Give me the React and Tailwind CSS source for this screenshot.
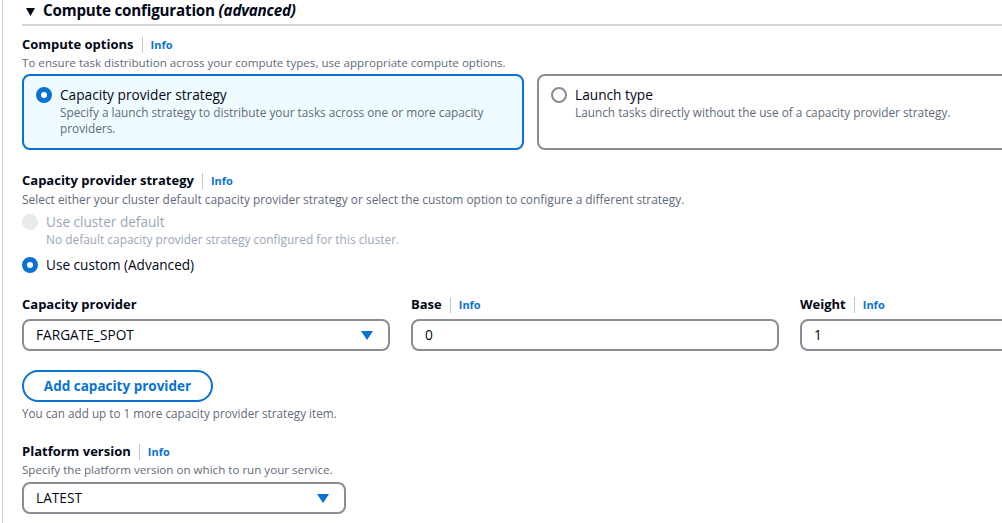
import React from "react";

function InfoLabel({ label, info = true }) {
  return (
    <div className="flex items-center h-[20px]">
      <span className="text-[13px] font-bold text-[#000716]">{label}</span>
      {info && <span className="mx-[8px] h-[16px] w-px bg-[#c6c6cd]"></span>}
      {info && <span className="text-[11px] font-bold text-[#0972d3]">Info</span>}
    </div>
  );
}

function Radio({ checked, disabled }) {
  if (disabled) {
    return <span className="block w-[16px] h-[16px] rounded-full bg-[#e9ebed] shrink-0"></span>;
  }
  if (checked) {
    return <span className="block w-[16px] h-[16px] rounded-full border-[5px] border-[#0972d3] bg-white shrink-0"></span>;
  }
  return <span className="block w-[16px] h-[16px] rounded-full border-2 border-[#8c8c94] bg-white shrink-0"></span>;
}

function Caret() {
  return (
    <svg width="12" height="9" viewBox="0 0 12 9">
      <path d="M0 0h12L6 9z" fill="#0972d3" />
    </svg>
  );
}

function Select({ value, width }) {
  return (
    <div className={`${width} h-[32px] rounded-[8px] border-2 border-[#8c8c94] bg-white flex items-center justify-between pl-[12px] pr-[15px]`}>
      <span className="text-[13.7px] text-[#000716]">{value}</span>
      <Caret />
    </div>
  );
}

function Input({ value }) {
  return (
    <div className="w-[368px] h-[32px] rounded-[8px] border-2 border-[#8c8c94] bg-white flex items-center pl-[12px]">
      <span className="text-[13.7px] text-[#000716]">{value}</span>
    </div>
  );
}

export default function App() {
  return (
    <div className="w-[1002px] h-[523px] overflow-hidden bg-white" style={{ fontFamily: '"Open Sans", "Noto Sans", sans-serif' }}>
      <div className="ml-[2px] border-l border-[#d1d5db] h-full pl-[19px]">
        <div className="w-[1200px]">
          <div className="flex items-center h-[26px] border-b-2 border-[#d5d5d9]">
            <svg width="9" height="8" viewBox="0 0 9 8" className="ml-[4px] mr-[8px]">
              <path d="M0 0h9L4.5 8z" fill="#000716" />
            </svg>
            <span className="text-[15.2px] tracking-[-0.2px] font-bold text-[#000716] leading-none pb-[2px]">
              Compute configuration <i className="font-bold">(advanced)</i>
            </span>
          </div>

          <div className="mt-[9px]">
            <InfoLabel label="Compute options" />
            <p className="text-[11.6px] text-[#5f6b7a] leading-[16px]">
              To ensure task distribution across your compute types, use appropriate compute options.
            </p>
          </div>

          <div className="flex gap-[13px] mt-[3px]">
            <div className="w-[502px] h-[76px] rounded-[8px] border-2 border-[#0972d3] bg-[#f0fbff] flex pt-[9px] pl-[12px] pr-[20px]">
              <div className="pt-[2px]"><Radio checked /></div>
              <div className="ml-[8px]">
                <div className="text-[13.7px] text-[#000716] leading-[19px]">Capacity provider strategy</div>
                <div className="text-[11.8px] text-[#5f6b7a] leading-[16px]">
                  Specify a launch strategy to distribute your tasks across one or more capacity providers.
                </div>
              </div>
            </div>
            <div className="w-[502px] h-[76px] rounded-[8px] border-2 border-[#8c8c94] bg-white flex pt-[9px] pl-[12px]">
              <div className="pt-[2px]"><Radio /></div>
              <div className="ml-[8px]">
                <div className="text-[13.7px] text-[#000716] leading-[19px]">Launch type</div>
                <div className="text-[11.8px] text-[#5f6b7a] leading-[16px]">
                  Launch tasks directly without the use of a capacity provider strategy.
                </div>
              </div>
            </div>
          </div>

          <div className="mt-[21px]">
            <InfoLabel label="Capacity provider strategy" />
            <p className="text-[11.9px] text-[#5f6b7a] leading-[16px]">
              Select either your cluster default capacity provider strategy or select the custom option to configure a different strategy.
            </p>
          </div>

          <div className="mt-[5px] flex">
            <div className="pt-[2px]"><Radio disabled /></div>
            <div className="ml-[8px]">
              <div className="text-[13.6px] text-[#9ba7b6] leading-[19px]">Use cluster default</div>
              <div className="text-[11.9px] text-[#9ba7b6] leading-[16px]">No default capacity provider strategy configured for this cluster.</div>
            </div>
          </div>
          <div className="mt-[8px] flex items-center">
            <Radio checked />
            <div className="ml-[8px] text-[13.6px] text-[#000716] leading-[19px]">Use custom (Advanced)</div>
          </div>

          <div className="mt-[21px] flex gap-[21px]">
            <div>
              <InfoLabel label="Capacity provider" info={false} />
              <div className="mt-[4px]"><Select value="FARGATE_SPOT" width="w-[368px]" /></div>
            </div>
            <div>
              <InfoLabel label="Base" />
              <div className="mt-[4px]"><Input value="0" /></div>
            </div>
            <div>
              <InfoLabel label="Weight" />
              <div className="mt-[4px]"><Input value="1" /></div>
            </div>
          </div>

          <button className="mt-[19px] h-[32px] w-[191px] rounded-full border-2 border-[#0972d3] text-[13.5px] font-bold text-[#0972d3] bg-white">
            Add capacity provider
          </button>
          <p className="mt-[3px] text-[11.7px] text-[#5f6b7a] leading-[16px]">
            You can add up to 1 more capacity provider strategy item.
          </p>

          <div className="mt-[21px]">
            <InfoLabel label="Platform version" />
            <p className="text-[11.6px] text-[#5f6b7a] leading-[16px]">
              Specify the platform version on which to run your service.
            </p>
            <div className="mt-[4px]"><Select value="LATEST" width="w-[324px]" /></div>
          </div>
        </div>
      </div>
    </div>
  );
}
